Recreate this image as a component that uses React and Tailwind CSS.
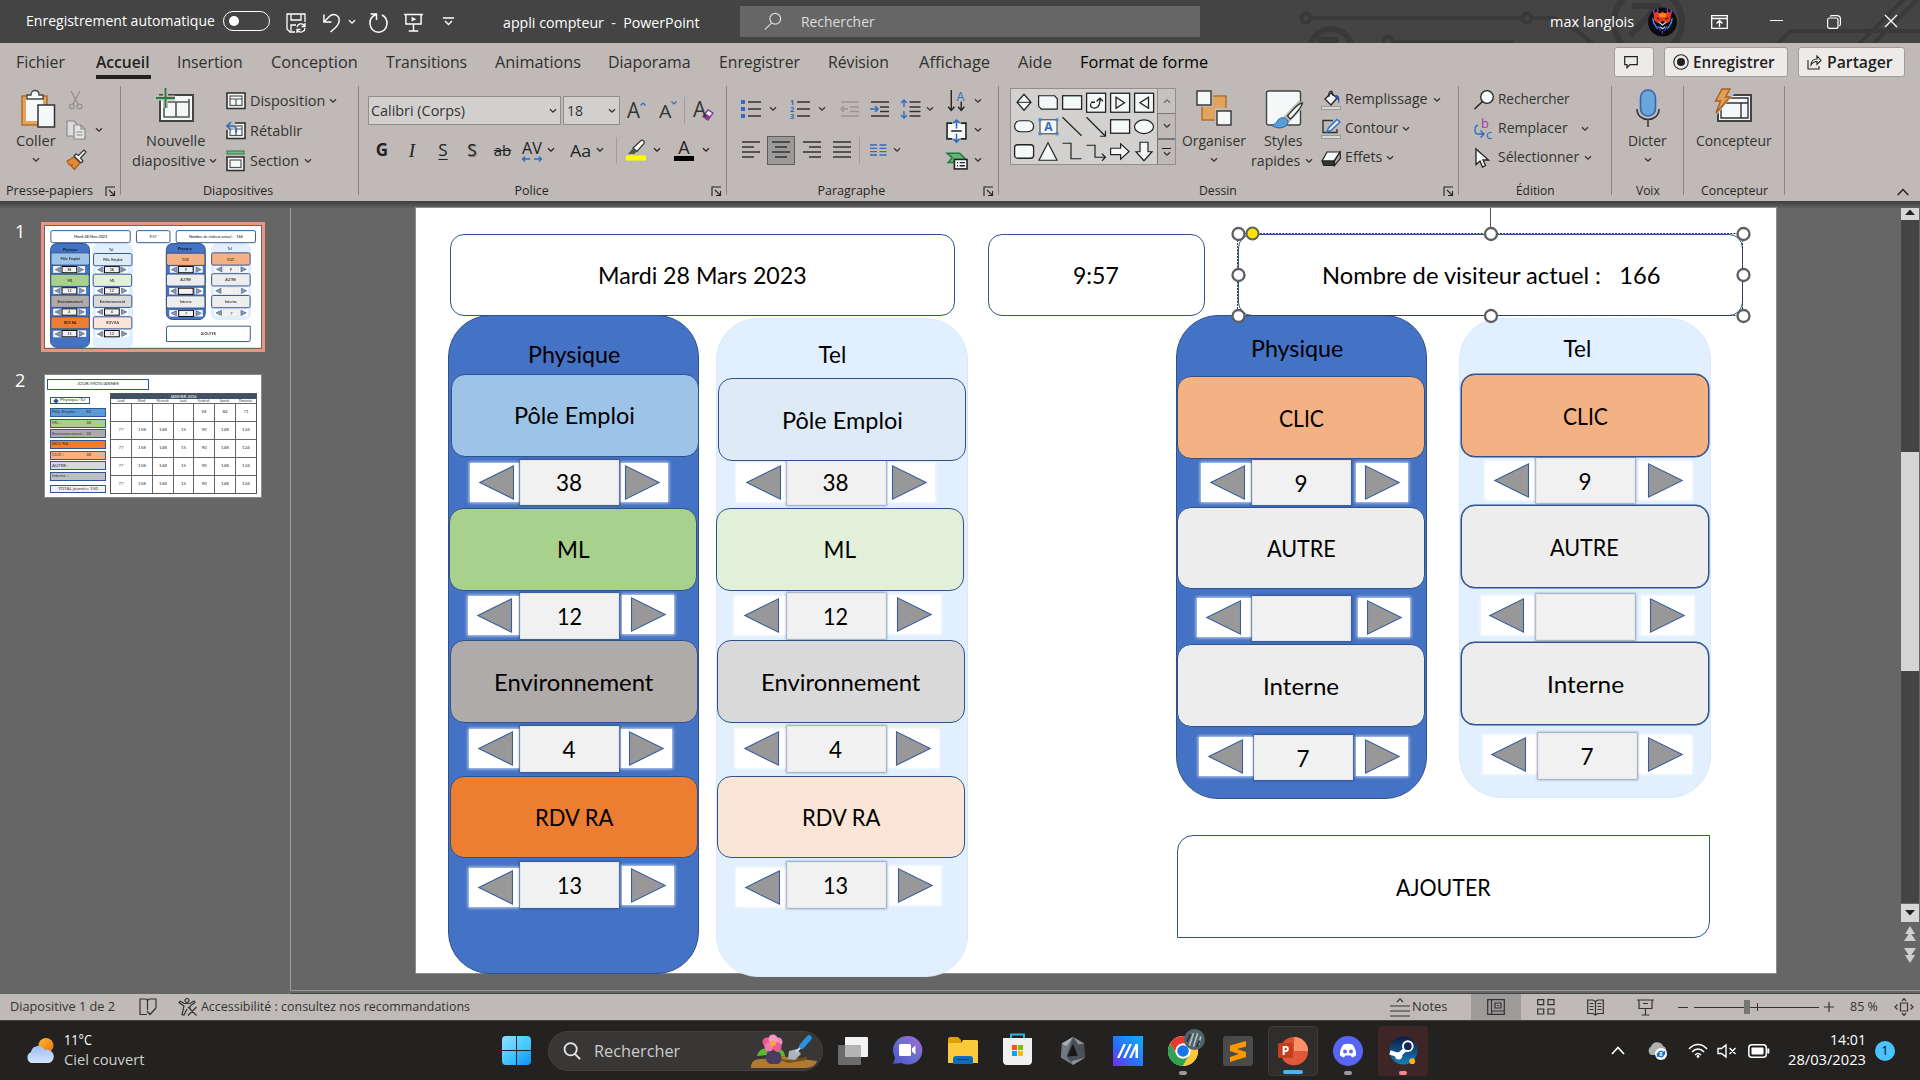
import React, { useLayoutEffect, useRef } from "react";

/* Text squeezed horizontally to the width of its box */
function Fit({ className = "", children }) {
  const outer = useRef(null);
  const inner = useRef(null);
  useLayoutEffect(() => {
    const w = outer.current.clientWidth;
    const n = inner.current.offsetWidth;
    if (w && n) inner.current.style.transform = `scaleX(${w / n})`;
  }, []);
  return (
    <span ref={outer} className={"inline-block shrink-0 whitespace-pre text-left leading-none " + className}>
      <span ref={inner} className="inline-block origin-left">{children}</span>
    </span>
  );
}

const Ic = ({ className = "", vb = "0 0 20 20", children }) => (
  <svg viewBox={vb} fill="none" className={"block shrink-0 overflow-visible " + className}>{children}</svg>
);

const Chev = ({ className = "" }) => (
  <span className={"flex h-[6px] w-3 shrink-0 justify-center " + className}>
    <Ic vb="0 0 8 6" className="h-[6px] w-2"><path d="M1 1.2l3 3 3-3" stroke="currentColor" strokeWidth="1.3" /></Ic>
  </span>
);

const Launcher = ({ className = "" }) => (
  <Ic vb="0 0 11 11" className={"h-[11px] w-[11px] " + className}>
    <path d="M1 10V1h9M4 4l5 5M9.5 5v4.5H5" stroke="#222" strokeWidth="1.1" />
  </Ic>
);

/* ---------- Title bar ---------- */
function TitleBar() {
  return (
    <div className="relative flex h-[43px] items-center overflow-hidden bg-[#444444] text-[15px] text-white">
      <svg className="absolute left-[1200px] top-0 h-[43px] w-[720px]" viewBox="1200 0 720 43" fill="none" stroke="#393939" strokeWidth="4">
        <circle cx="1306" cy="18" r="4.5" /><path d="M1311 18h211M1533 18h22l24 14 14 12" />
        <circle cx="1527" cy="18" r="4.5" />
        <circle cx="1331" cy="50" r="21" strokeWidth="6" /><path d="M1318 41h21" strokeWidth="8" />
        <circle cx="1388" cy="41" r="4.5" /><path d="M1394 42h120" />
        <circle cx="1648" cy="22" r="34" strokeWidth="6" /><path d="M1632 6h26v20M1656 8l-26 28" strokeWidth="6" />
        <path d="M1776 45l14-14h62M1852 31h70M1858 45l46-46M1872 45l46-46" />
      </svg>
      <Fit className="relative -top-px ml-[26px] w-[189px]">Enregistrement automatique</Fit>
      <span className="relative -top-px ml-2 flex h-5 w-[47px] shrink-0 items-center rounded-full border border-white pl-[5px]">
        <span className="h-[10px] w-[10px] rounded-full bg-white" />
      </span>
      <Ic className="ml-4 mt-[2px] h-5 w-5"><path d="M9 19H4l-3-3V1h18v8M5 1v6h10V1M5 18v-6h5" stroke="#fff" strokeWidth="1.3" /><path d="M11 14a4.2 4.2 0 0 1 7-2l1 1M19 10v3.5h-3.500M19 15a4.200 4.200 0 0 1-7 3l-1-1M11 20v-3.500h3.500" stroke="#fff" strokeWidth="1.300" /></Ic>
      <Ic className="ml-4 mt-[2px] h-5 w-[19px]"><path d="M2 1v8h8M2 9l6-6c4-4 11-1 10 5 0 3-2 5-4 7l-5 4.500" stroke="#fff" strokeWidth="1.500" /></Ic>
      <Chev className="ml-[5px]" />
      <Ic className="ml-[10px] mt-[2px] h-5 w-[21px]"><path d="M2 1h6v6M7.500 1.500C3 3.500 1 7 1.500 11c.5 5 4 8.300 8.500 8.300s8-3.300 8.500-8.300c.3-4-1.500-7-5-9" stroke="#fff" strokeWidth="1.500" /></Ic>
      <Ic className="ml-[15px] mt-[2px] h-5 w-[19px]"><path d="M0 1h20M2 1v10h16V1M10 11v7M5 18.500h10" stroke="#fff" strokeWidth="1.500" /><path d="M8 3.500l5 2.500-5 2.500z" fill="#fff" /></Ic>
      <Ic vb="0 0 11 9" className="ml-5 h-[9px] w-[11px]"><path d="M0 1h11M2 4l3.500 3.500L9 4" stroke="#fff" strokeWidth="1.400" /></Ic>
      <Fit className="relative top-px ml-[49px] w-[197px]">appli compteur  -  PowerPoint</Fit>
      <div className="relative ml-10 flex h-[31px] w-[460px] shrink-0 items-center bg-[#666666] text-[#dedede]">
        <Ic className="ml-6 h-[19px] w-[18px]"><circle cx="12.500" cy="7" r="6" stroke="#ddd" strokeWidth="1.300" /><path d="M8.500 11.500L1 19" stroke="#ddd" strokeWidth="1.300" /></Ic>
        <Fit className="ml-[19px] w-[74px]">Rechercher</Fit>
      </div>
      <Fit className="relative ml-[350px] w-[84px]">max langlois</Fit>
      <Ic vb="0 0 30 30" className="relative ml-[14px] h-[30px] w-[29px]">
        <circle cx="15" cy="15" r="15" fill="#0b0b12" />
        <path d="M6 6l4-2 2 3 3-3 3 3 2-3 4 2-1 8-3 2-5-2-5 2-4-3z" fill="#e83a1e" /><path d="M11 6h8l-1 4h-6z" fill="#ff8b1c" /><path d="M9 11l3 1M21 11l-3 1" stroke="#4a1030" strokeWidth="1.500" />
        <path d="M5 11c0 6 3 8 5 11m15-11c0 6-3 8-5 11" stroke="#3a8ee0" strokeWidth="1.500" /><path d="M11 15l4 3 4-3M12 20l3 2 3-2" stroke="#bfe0ff" strokeWidth="1.200" />
        <path d="M10 19l3 5M20 19l-3 5M15 24v3" stroke="#4448c0" strokeWidth="1.300" />
        <path d="M6 2.500v4M10 1v3M20 1v3M24 2.500v4" stroke="#7a48d0" strokeWidth="1.500" />
      </Ic>
      <Ic vb="0 0 17 14" className="relative ml-[34px] h-[14px] w-[17px]"><path d="M.7.700h15.600v12.600H.7zM.7 3.500h15.600M8.500 12V5.500M5.500 8.500l3-3 3 3" stroke="#fff" strokeWidth="1.300" /></Ic>
      <span className="relative -top-px ml-[42px] h-px w-[13px] shrink-0 bg-white" />
      <Ic vb="0 0 14 14" className="relative ml-11 h-[14px] w-[14px]"><rect x=".6" y="3" width="10.400" height="10.400" rx="2" stroke="#fff" strokeWidth="1.200" /><path d="M3 1.500C3.500.800 4 .6 5 .6h5c2 0 3.400 1.400 3.400 3.400v5c0 1-.3 1.500-1 2" stroke="#fff" strokeWidth="1.200" /></Ic>
      <Ic vb="0 0 14 14" className="relative -top-px ml-[43px] h-[14px] w-[14px]"><path d="M1 1l12 12M13 1L1 13" stroke="#fff" strokeWidth="1.300" /></Ic>
    </div>
  );
}

/* ---------- Tabs ---------- */
const TABS = [
  ["Fichier", "ml-4 w-[49px]"],
  ["Insertion", "ml-[26px] w-[66px]"],
  ["Conception", "ml-7 w-[87px]"],
  ["Transitions", "ml-7 w-[81px]"],
  ["Animations", "ml-7 w-[86px]"],
  ["Diaporama", "ml-[27px] w-[83px]"],
  ["Enregistrer", "ml-7 w-[81px]"],
  ["Révision", "ml-7 w-[61px]"],
  ["Affichage", "ml-[30px] w-[71px]"],
  ["Aide", "ml-7 w-[34px]"],
];
function Tabs() {
  return (
    <div className="flex h-[43px] items-center text-[16.5px] text-[#303030]">
      <Fit className={"relative -top-[2px] " + TABS[0][1]}>{TABS[0][0]}</Fit>
      <div className="ml-[31px] flex h-9 w-[55px] shrink-0 flex-col justify-between self-start">
        <Fit className="mt-[11px] w-[54px] font-semibold text-[#222]">Accueil</Fit>
        <span className="h-1 w-full bg-[#222]" />
      </div>
      {TABS.slice(1).map(([t, c]) => (
        <Fit key={t} className={"relative -top-[2px] " + c}>{t}</Fit>
      ))}
      <Fit className="relative -top-[2px] ml-7 w-[128px] text-black">Format de forme</Fit>
      <div className="mb-[5px] ml-[406px] flex shrink-0 items-center gap-[10px] font-semibold text-[#222]">
        <div className="flex h-[30px] w-10 items-center justify-center rounded-[3px] border border-[#a09c9a] bg-[#edebe9]">
          <Ic vb="0 0 14 13" className="-ml-[6px] h-[13px] w-[14px]"><path d="M.7.700h12.600v8H6l-3 3v-3H.7z" stroke="#222" strokeWidth="1.200" /></Ic>
        </div>
        <div className="flex h-[30px] w-[124px] items-center rounded-[3px] border border-[#a09c9a] bg-[#edebe9]">
          <Ic vb="0 0 16 16" className="ml-[8px] h-4 w-4"><circle cx="8" cy="8" r="7.200" stroke="#222" strokeWidth="1.100" /><circle cx="8" cy="8" r="4" fill="#222" /></Ic>
          <Fit className="ml-1 w-[82px] text-base">Enregistrer</Fit>
        </div>
        <div className="flex h-[30px] w-[107px] items-center rounded-[3px] border border-[#a09c9a] bg-[#edebe9]">
          <Ic vb="0 0 15 15" className="ml-[8px] h-[15px] w-[15px]"><path d="M1 5v9h11v-3M4 10c0-4 3-6 6-6V1l4 4.500L10 9.500v-3c-3 0-4.500 1-6 3.500z" stroke="#222" strokeWidth="1.100" /></Ic>
          <Fit className="ml-[5px] w-[66px] text-base">Partager</Fit>
        </div>
      </div>
    </div>
  );
}

/* ---------- Ribbon ---------- */
function Group({ className = "", label, labelClass = "w-10", launcher, children }) {
  return (
    <div className="flex shrink-0">
      <div className={"flex h-[115px] flex-col " + className}>
        <div className="flex h-24 items-start">{children}</div>
        <div className="relative flex h-[18px] items-center justify-center text-[12.5px] text-[#262626]">
          <Fit className={labelClass}>{label}</Fit>
          {launcher && <Launcher className="absolute right-[4px] top-1" />}
        </div>
      </div>
      <div className="h-[109px] w-px bg-[#8b8785]" />
    </div>
  );
}
const Sep = ({ className = "" }) => <span className={"h-[27px] w-px shrink-0 bg-[#a29e9c] " + className} />;
const Small = ({ icon, label, className, chev, h = "h-[30px]" }) => (
  <div className={"flex items-center " + h}>
    {icon}
    <Fit className={"relative -top-px ml-1 " + className}>{label}</Fit>
    {chev && <Chev className={chev} />}
  </div>
);
const Layout = ({ children }) => (
  <Ic className="h-5 w-5"><rect x="1" y="2" width="18" height="15.500" fill="#f4f8f8" stroke="#333" strokeWidth="1.600" /><rect x="4" y="5" width="12" height="9.500" stroke="#555" strokeWidth="1.200" /><path d="M4 8h12M10 8v6.500" stroke="#555" strokeWidth="1.200" />{children}</Ic>
);

const W = "#f4f8f8";
const D = "#222";
const GALLERY = [
  <g key="0"><path d="M12 4l7 8-7 8-7-8zM5 12h14" fill={W} stroke={D} strokeWidth="1.200" /></g>,
  <path key="1" d="M2.600 5.500h16l2.700 3v10.300h-16l-2.700-3z" fill={W} stroke={D} strokeWidth="1.200" />,
  <rect key="2" x="2.600" y="5.500" width="19" height="13.500" fill={W} stroke={D} strokeWidth="1.300" />,
  <g key="3"><rect x="2.600" y="3" width="19" height="19" fill={W} stroke={D} strokeWidth="1.300" /><path d="M7 13c-2 4 3 6 6 4 2-1 3-3 3-8M12.500 11l3.500-3 3 3M7 12h4" stroke={D} strokeWidth="1.300" /></g>,
  <g key="4"><rect x="2.600" y="3" width="19" height="19" fill={W} stroke={D} strokeWidth="1.300" /><path d="M8 7v11l8.500-5.500z" stroke={D} strokeWidth="1.300" /></g>,
  <g key="5"><rect x="2.600" y="3" width="19" height="19" fill={W} stroke={D} strokeWidth="1.300" /><path d="M16.500 7v11L8 12.500z" stroke={D} strokeWidth="1.300" /></g>,
  <rect key="6" x="2.600" y="6.500" width="19" height="11" rx="5.500" fill={W} stroke={D} strokeWidth="1.200" />,
  <g key="7"><rect x="4" y="5.500" width="17" height="14" fill={W} stroke="#555" strokeWidth="1.200" /><path d="M2.500 4h3v3h-3zM19.500 4h3v3h-3zM2.500 18h3v3h-3zM19.500 18h3v3h-3z" fill="#4a84d0" /><text x="12.500" y="17" textAnchor="middle" fontSize="12" fontWeight="700" fontFamily="Open Sans" fill="#2e6cc0">A</text></g>,
  <path key="8" d="M2.500 3l19 18.500" stroke={D} strokeWidth="1.200" />,
  <path key="9" d="M2.500 3l18.500 18.500M21.500 16.500V22h-5.500" stroke={D} strokeWidth="1.200" />,
  <rect key="10" x="2.600" y="5.500" width="19" height="13.500" fill={W} stroke={D} strokeWidth="1.300" />,
  <ellipse key="11" cx="12" cy="12.500" rx="9.500" ry="6.800" fill={W} stroke={D} strokeWidth="1.200" />,
  <rect key="12" x="2.600" y="5.500" width="19" height="13.500" rx="3" fill={W} stroke={D} strokeWidth="1.300" />,
  <path key="13" d="M12 3.500l9 17.500H3z" fill={W} stroke={D} strokeWidth="1.200" />,
  <path key="14" d="M2.500 4H11v15.500h10.500" stroke={D} strokeWidth="1.200" />,
  <path key="15" d="M2.500 6H11v12h10M18 14.500l3.500 3.500-3.500 3.500" stroke={D} strokeWidth="1.200" />,
  <path key="16" d="M2.600 9h10V4.500l8.500 7.700-8.500 7.700v-4.500h-10z" fill={W} stroke={D} strokeWidth="1.200" />,
  <path key="17" d="M8 3h8v9.500h4L12 21.500l-8-9H8z" fill={W} stroke={D} strokeWidth="1.200" />,
];

const Lines = ({ rows }) => (
  <Ic className="h-5 w-5"><path d={rows} stroke="#333" strokeWidth="1.500" /></Ic>
);

function Ribbon() {
  return (
    <div className="flex h-[115px] items-start text-[15px] text-[#333]">
      <Group className="w-[120px]" label="Presse-papiers" labelClass="w-[87px] mr-[22px]" launcher>
        <div className="ml-[14px] flex w-[43px] flex-col items-center pt-1">
          <Ic vb="0 0 36 38" className="ml-[5px] h-[38px] w-9"><rect x="2" y="6" width="25" height="29" fill="#dfa45e" stroke="#b56a28" strokeWidth="1.500" /><rect x="6" y="9" width="17" height="22" fill={W} /><path d="M7 9V5h4c0-6 8-6 8 0h4v4z" fill={W} stroke="#444" strokeWidth="1.300" /><rect x="18" y="15" width="16.500" height="22" fill={W} stroke="#333" strokeWidth="1.500" /></Ic>
          <Fit className="mt-[5px] w-10">Coller</Fit>
          <Chev className="mt-[9px]" />
        </div>
        <div className="ml-[9px] flex flex-col gap-[10px] pt-1">
          <Ic className="h-5 w-5 opacity-60"><path d="M5 1l7 13M14 1L7 14" stroke="#777" strokeWidth="1.400" /><circle cx="6" cy="16.500" r="2.400" stroke="#777" strokeWidth="1.300" /><circle cx="13.500" cy="16.500" r="2.400" stroke="#777" strokeWidth="1.300" /></Ic>
          <div className="flex items-center">
            <Ic className="h-5 w-5"><path d="M7 16H1V1h7l3 3" fill="#dcdcdc" stroke="#888" strokeWidth="1.200" /><path d="M8 5h7l4 4v10H8z" fill="#e4e4e4" stroke="#888" strokeWidth="1.200" /><path d="M15 5v4h4M10.500 12h6M10.500 15h6" stroke="#888" strokeWidth="1.200" /></Ic>
            <Chev className="ml-[7px]" />
          </div>
          <Ic className="h-5 w-5"><path d="M1 11l7-4 6 6-5.500 6.500-3-3 1-2-3 .5z" fill="#e08a3c" stroke="#b05c1c" strokeWidth="1.200" /><path d="M8 6l7 7 2-2-2.500-3L20 2l-2-2-5.500 5.500L10 4z" fill={W} stroke="#333" strokeWidth="1.200" /></Ic>
        </div>
      </Group>

      <Group className="w-[237px]" label="Diapositives" labelClass="w-[70px] mr-[3px]">
        <div className="ml-[11px] flex w-[86px] flex-col items-center pt-[2px]">
          <Ic vb="0 0 38 34" className="h-[34px] w-[38px]"><rect x="4" y="7" width="33" height="26" fill="#f4f8f8" stroke="#444" strokeWidth="2" /><path d="M8 14h25M8 14v15h25V11M20 14v15" stroke="#555" strokeWidth="1.600" /><path d="M0 10h19M9.500 0v20" stroke="#bfbab7" strokeWidth="5" /><path d="M0 10h19M9.500 0v20" stroke="#1e8040" strokeWidth="1.800" /></Ic>
          <Fit className="mt-[11px] w-[59px]">Nouvelle</Fit>
          <div className="mt-[5px] flex items-center"><Fit className="w-[73px]">diapositive</Fit><Chev className="ml-[2px]" /></div>
        </div>
        <div className="ml-2">
          <Small icon={<Layout />} label="Disposition" className="w-[75px]" chev="ml-[2px]" />
          <Small icon={<Layout><path d="M0 0h9v9H0z" fill="#bfbab7" /><path d="M1 5h6c3 0 4 3 3 7M5 1L1 5l4 4" stroke="#2e6cc0" strokeWidth="1.700" /></Layout>} label="Rétablir" className="w-[52px]" />
          <Small icon={<Ic className="h-5 w-5"><rect x="1" y="0" width="17" height="3" fill="#7ab888" stroke="#2a7a44" strokeWidth="1" /><rect x="1" y="6" width="17" height="13.500" fill={W} stroke="#333" strokeWidth="1.600" /><rect x="4" y="9" width="11" height="7.500" stroke="#555" strokeWidth="1.200" /></Ic>} label="Section" className="w-[49px]" chev="ml-[3px]" />
        </div>
      </Group>

      <Group className="w-[367px]" label="Police" labelClass="w-[34px] mr-[22px]" launcher>
        <div className="pl-[9px]">
          <div className="mt-[10px] flex h-[29px] items-center">
            <div className="flex h-[29px] w-[193px] items-center justify-between border border-[#908d8b] bg-[#d2d0cf] pl-[2px]">
              <Fit className="w-[94px]">Calibri (Corps)</Fit><Chev className="mr-[1px]" />
            </div>
            <div className="ml-[2px] flex h-[29px] w-[57px] items-center justify-between border border-[#908d8b] bg-[#d2d0cf] pl-[3px]">
              <Fit className="w-4">18</Fit><Chev className="mr-[1px]" />
            </div>
            <div className="ml-[7px] flex w-[20px] -translate-y-[2px] items-start"><Fit className="w-[13px] text-[22px]">A</Fit><Ic vb="0 0 6 4" className="mt-[4px] h-1 w-[6px]"><path d="M.5 3.500L3 1l2.500 2.500" stroke="#2e6cc0" strokeWidth="1.200" /></Ic></div>
            <div className="ml-[12px] flex w-[18px] -translate-y-[2px] items-start"><Fit className="mt-[4px] w-[12px] text-[18px]">A</Fit><Ic vb="0 0 6 4" className="mt-[3px] h-1 w-[6px]"><path d="M.5.500L3 3 5.500.500" stroke="#2e6cc0" strokeWidth="1.200" /></Ic></div>
            <Sep className="ml-[7px]" />
            <div className="ml-2 flex w-5 -translate-y-px items-center"><Fit className="w-[13px] text-[21px]">A</Fit><Ic vb="0 0 12 12" className="-ml-1 mt-[10px] h-3 w-3"><path d="M1 7.500L6 1l5 3-5 7z" fill="#f4f0f6" stroke="#8a3a96" strokeWidth="1.400" /><path d="M1 7.500l2.500-3 5 3L6 11z" fill="#8a3a96" /></Ic></div>
          </div>
          <div className="mt-[10px] flex h-[30px] items-center text-[17px] text-[#222]">
            <span className="w-[28px] shrink-0 -translate-y-px text-center font-bold leading-none">G</span>
            <span className="w-[32px] shrink-0 text-center font-['Liberation_Serif'] text-[19px] italic leading-none">I</span>
            <span className="w-[30px] shrink-0 -translate-y-px text-center leading-none underline underline-offset-[3px]">S</span>
            <span className="w-[28px] shrink-0 -translate-y-px text-center leading-none [text-shadow:1px_1px_1px_#777]">S</span>
            <span className="flex w-[33px] shrink-0 justify-center text-[15px] leading-none line-through">ab</span>
            <span className="flex w-[26px] shrink-0 flex-col items-center">
              <Fit className="w-5 text-[17px]">AV</Fit>
              <Ic vb="0 0 20 6" className="h-[6px] w-5"><path d="M0 3h8M3 .5L.700 3 3 5.500M20 3h-8M17 .5L19.300 3 17 5.500" stroke="#2e6cc0" strokeWidth="1.300" /></Ic>
            </span>
            <Chev />
            <span className="ml-[10px] flex w-[27px] shrink-0 justify-center leading-none"><Fit className="w-[21px]">Aa</Fit></span>
            <Chev />
            <Sep className="ml-[10px]" />
            <Ic vb="0 0 21 22" className="ml-2 h-[22px] w-[21px]"><path d="M8 9l8-7.500c2-1 4 1 3 3L12 12.500z" fill={W} stroke="#333" strokeWidth="1.200" /><path d="M8 9l4 3.500-3 2.500H3z" fill="#555" /><path d="M1 16.500h20v5H1z" fill="#ff0" /></Ic>
            <Chev className="ml-[5px]" />
            <span className="ml-[11px] flex w-[20px] shrink-0 flex-col items-center"><span className="text-[18px] leading-[17px]">A</span><span className="h-[5px] w-full bg-black" /></span>
            <Chev className="ml-[6px]" />
          </div>
        </div>
      </Group>

      <Group className="w-[271px]" label="Paragraphe" labelClass="w-[68px] mr-[22px]" launcher>
        <div className="w-[219px] pt-2">
          <div className="flex h-[30px] items-center pl-[14px]">
            <Ic className="h-5 w-5"><path d="M7 3h13M7 10h13M7 17h13" stroke="#333" strokeWidth="1.500" /><path d="M0 1h4v4H0zM0 8h4v4H0zM0 15h4v4H0z" fill="#2e6cc0" /></Ic>
            <Chev className="ml-[6px]" />
            <Ic className="ml-[11px] h-5 w-5"><path d="M7 3h13M7 10h13M7 17h13" stroke="#333" strokeWidth="1.500" /><g fill="#2e6cc0" fontSize="7.500" fontWeight="700" fontFamily="Open Sans"><text x="0" y="5.500">1</text><text x="0" y="12.700">2</text><text x="0" y="20">3</text></g></Ic>
            <Chev className="ml-[6px]" />
            <Ic className="ml-3 h-5 w-5"><path d="M1 3h18M10 8h9M10 12.500h9M1 17h18M1 10h7M4 7l-3 3 3 3" stroke="#999593" strokeWidth="1.400" /></Ic>
            <Ic className="ml-[10px] h-5 w-5"><path d="M1 3h18M10 8h9M10 12.500h9M1 17h18" stroke="#333" strokeWidth="1.400" /><path d="M0 10h8M5 7l3 3-3 3" stroke="#2e6cc0" strokeWidth="1.500" /></Ic>
            <Ic className="ml-[10px] h-5 w-[21px]"><path d="M9 3h11M9 8h11M9 12.500h11M9 17h11" stroke="#333" strokeWidth="1.400" /><path d="M3.500 1v7M.5 4l3-3 3 3M3.500 12v7M.5 16l3 3 3-3" stroke="#2e6cc0" strokeWidth="1.400" /></Ic>
            <Chev className="ml-[3px]" />
          </div>
          <div className="mt-[11px] flex h-[30px] items-center pl-[14px]">
            <Lines rows="M1 2h18M1 7h12M1 12h18M1 17h12" />
            <span className="ml-[6px] flex h-[29px] w-7 shrink-0 items-center justify-center border border-[#5f5d5c] bg-[#9c9a98]"><Lines rows="M1 2h18M4 7h12M1 12h18M4 17h12" /></span>
            <span className="ml-[7px]"><Lines rows="M1 2h18M7 7h12M1 12h18M7 17h12" /></span>
            <span className="ml-[10px]"><Lines rows="M1 2h18M1 7h18M1 12h18M1 17h18" /></span>
            <Sep className="ml-[7px]" />
            <Ic vb="0 0 17 12" className="ml-[10px] h-3 w-[17px]"><path d="M0 1h7M0 4.300h7M0 7.700h7M0 11h7M9.500 1h7M9.500 4.300h7M9.500 7.700h7M9.500 11h7" stroke="#2e6cc0" strokeWidth="1.300" /></Ic>
            <Chev className="ml-1" />
          </div>
        </div>
        <div>
          <div className="flex h-[29px] items-center"><Ic className="h-[21px] w-[21px]"><path d="M5 0v19M2 16l3 3.500L8 16M14.500 11v8M11.500 16l3 3.500 3-3.500" stroke="#222" strokeWidth="1.300" /><text x="10" y="10" fontSize="12" fontFamily="Open Sans" fill="#2e6cc0">A</text></Ic><Chev className="ml-[5px]" /></div>
          <div className="flex h-[30px] items-center"><Ic className="h-[21px] w-[21px]"><rect x="1" y="3" width="18" height="15" fill={W} /><path d="M6 3H1v15h5M14 3h5v15h-5M5 10.500h10" stroke="#222" strokeWidth="1.500" /><path d="M10 0v8M7 3l3-3 3 3M10 21v-8M7 18l3 3 3-3" stroke="#2e6cc0" strokeWidth="1.500" /></Ic><Chev className="ml-[5px]" /></div>
          <div className="flex h-[30px] items-center"><Ic className="h-[21px] w-[21px]"><path d="M1 3h12l5 5-3 4H2l4-4.500z" fill="#66b27a" stroke="#1e7a3c" strokeWidth="1.400" /><rect x="8" y="9" width="12" height="9" fill={W} stroke="#222" strokeWidth="1.500" /><path d="M10.500 12h1M13 12h5M10.500 15h1M13 15h5" stroke="#222" strokeWidth="1.200" /></Ic><Chev className="ml-[5px]" /></div>
        </div>
      </Group>

      <Group className="w-[459px]" label="Dessin" labelClass="w-[38px] mr-[22px]" launcher>
        <div className="ml-[11px] mt-[2px] flex h-[77px] w-[166px] border border-[#918e8c] bg-[#d2d1d0]">
          <div className="grid h-full flex-1 grid-cols-[repeat(6,24px)] content-center pl-px">
            {GALLERY.map((g, i) => <Ic key={i} vb="0 0 24 24" className="h-[24.500px] w-6">{g}</Ic>)}
          </div>
          <div className="flex w-[18px] flex-col">
            <div className="flex flex-1 items-center justify-center border-l border-[#918e8c] bg-[#c5c2c0]"><Chev className="rotate-180 opacity-60" /></div>
            <div className="flex flex-1 items-center justify-center border border-r-0 border-[#777] bg-[#bfbab7]"><Chev /></div>
            <div className="flex flex-1 flex-col items-center justify-center gap-[2px] border-l border-t border-[#777] bg-[#bfbab7]"><span className="h-px w-[9px] bg-[#222]" /><Chev /></div>
          </div>
        </div>
        <div className="ml-1 flex w-[67px] flex-col items-center pt-1">
          <Ic vb="0 0 36 38" className="h-[38px] w-9"><rect x="6" y="6" width="24" height="24" fill="#dfa45e" stroke="#b56a28" strokeWidth="1.400" /><path d="M0 0h17v17H0zM19 18h17v18H19z" fill="#bfbab7" /><rect x="1" y="1" width="14" height="14" fill={W} stroke="#333" strokeWidth="1.400" /><rect x="21" y="21" width="14" height="14" fill={W} stroke="#333" strokeWidth="1.400" /></Ic>
          <Fit className="mt-[5px] w-16">Organiser</Fit>
          <Chev className="mt-[9px]" />
        </div>
        <div className="ml-[4px] flex w-[63px] flex-col items-center pt-1">
          <Ic vb="0 0 38 38" className="ml-[2px] h-[38px] w-[38px]"><rect x="1.500" y="1" width="34" height="34" rx="2" fill={W} stroke="#444" strokeWidth="1.400" /><path d="M37 13L20 31" stroke="#bfbab7" strokeWidth="8" /><path d="M37.500 13c-3 0-6 2-15 13l3 3c8-8 11-12 12-16z" fill={W} stroke="#333" strokeWidth="1.300" /><path d="M6 35c4 0 5-2 7-5 3-4 9-2 10 1 1 6-9 10-17 4z" fill="#5a9cd8" stroke="#2c66a8" strokeWidth="1" /></Ic>
          <Fit className="mt-[5px] w-[38px]">Styles</Fit>
          <div className="mt-[5px] flex items-center"><Fit className="w-[49px]">rapides</Fit><Chev className="ml-[3px]" /></div>
        </div>
        <div className="-mt-px ml-[7px]">
          <Small h="h-[29px]" icon={<Ic className="h-5 w-5"><path d="M10 3l-6 6 6 6 6-7z" fill={W} stroke="#222" strokeWidth="1.300" /><path d="M8 7c-1-7 4-8 4-1" stroke="#222" strokeWidth="1.200" /><path d="M14 5c4 0 5 2 4 9-1-3-1-5-3-6z" fill="#2c4fa0" /><rect x=".5" y="16.500" width="19" height="3" fill="#d8d8d8" stroke="#999" /></Ic>} label="Remplissage" className="w-[83px]" chev="ml-[3px]" />
          <Small h="h-[29px]" icon={<Ic className="h-5 w-5"><path d="M12 1.500H2v12h14V10" stroke="#333" strokeWidth="1.400" /><path d="M6 13l1.500-4L16 .500l3 2.500-9 8.500z" fill="#e8f0fa" stroke="#2e6cc0" strokeWidth="1.400" /><rect x=".5" y="16.500" width="19" height="3" fill="#d8d8d8" stroke="#999" /></Ic>} label="Contour" className="w-[53px]" chev="ml-[2px]" />
          <Small h="h-[29px]" icon={<Ic className="h-5 w-5"><path d="M6 4h13l-6 9H1z" fill={W} stroke="#222" strokeWidth="1.200" /><path d="M1 13h12v4.500H2.500z" fill="#333" stroke="#222" /><path d="M19 4l.5 6-6 7.500V13z" fill="#aaa" stroke="#222" strokeWidth="1.200" /></Ic>} label="Effets" className="w-[37px]" chev="ml-[2px]" />
        </div>
      </Group>

      <Group className="w-[152px]" label="Édition" labelClass="w-[39px]">
        <div className="-mt-px ml-[15px]">
          <Small h="h-[29px]" icon={<Ic className="h-5 w-5"><circle cx="13" cy="7" r="6.300" fill={W} stroke="#222" strokeWidth="1.300" /><path d="M8.500 11.500L.500 19" stroke="#222" strokeWidth="1.500" /></Ic>} label="Rechercher" className="w-[72px]" />
          <Small h="h-[29px]" icon={<Ic className="h-5 w-5"><text x="7" y="9" fontSize="13" fontFamily="Open Sans" fill="#a03aa8">b</text><text x="12" y="19.500" fontSize="13" fontFamily="Open Sans" fill="#2e6cc0">c</text><path d="M4 6c-4 1-4 9 0 9h5M6.500 11.500L10 15l-3.500 3.500" stroke="#2e6cc0" strokeWidth="1.400" /></Ic>} label="Remplacer" className="w-[70px]" chev="ml-[11px]" />
          <Small h="h-[29px]" icon={<Ic className="h-5 w-5"><path d="M2 1v15.500l4-3.500 2.500 6 3-1.500-2.500-5.500h5.500z" fill={W} stroke="#222" strokeWidth="1.300" /></Ic>} label="Sélectionner" className="w-[81px]" chev="ml-[3px]" />
        </div>
      </Group>

      <Group className="w-[71px]" label="Voix" labelClass="w-6">
        <div className="flex w-full flex-col items-center pt-[3px]">
          <Ic vb="0 0 24 38" className="h-[38px] w-6"><rect x="4.500" y="1" width="15" height="26" rx="7.500" fill="#6aa6dc" stroke="#3a62a8" strokeWidth="1.600" /><path d="M1 20c0 14 22 14 22 0M12 31v7" stroke="#333" strokeWidth="1.500" /></Ic>
          <Fit className="mt-[6px] w-[39px]">Dicter</Fit>
          <Chev className="mt-[9px]" />
        </div>
      </Group>

      <Group className="w-[100px]" label="Concepteur" labelClass="w-[67px]">
        <div className="flex w-full flex-col items-center pt-[2px]">
          <Ic vb="0 0 38 36" className="-ml-[3px] h-9 w-[38px]"><rect x="4" y="7" width="33" height="26" fill={W} stroke="#444" strokeWidth="2" /><path d="M7 15h27M27 15v15M7 10h27v20H7z" stroke="#333" strokeWidth="1.400" /><path d="M7 0h9l-4 8h4L1 26l4-12H0z" fill="#bfbab7" stroke="#bfbab7" strokeWidth="4" /><path d="M8 1h8l-4.500 8H16L2 25l4.500-12H1.500z" fill="#e0a055" stroke="#b05c1c" strokeWidth="1.400" /></Ic>
          <Fit className="mt-[9px] w-[76px]">Concepteur</Fit>
        </div>
      </Group>
      <Ic vb="0 0 12 8" className="ml-[112px] mt-[102px] h-2 w-3"><path d="M.700 7L6 1.500 11.300 7" stroke="#222" strokeWidth="1.500" /></Ic>
    </div>
  );
}

/* ---------- Slide 1 (coordinates in page pixels; origin 416,208) ---------- */
const BOXES = [
  { x: 448, y: 315, w: 251, h: 659, r: 42, f: "#4472c4", b: "#2f528f" },
  { x: 716, y: 318, w: 252, h: 659, r: 42, f: "#e1efff", b: "#d9e8fb" },
  { x: 1176, y: 315, w: 251, h: 484, r: 42, f: "#4472c4", b: "#2f528f" },
  { x: 1459, y: 318, w: 252, h: 480, r: 42, f: "#e1efff", b: "#d9e8fb" },
  { x: 450, y: 234, w: 505, h: 82, r: 14, f: "#fff", b: "#2f528f" },
  { x: 988, y: 234, w: 217, h: 82, r: 14, f: "#fff", b: "#2f528f" },
  { x: 1238, y: 234, w: 505, h: 82, r: 14, f: "#fff", b: "#2f528f" },
];
const CARDS = [
  [451, 374, 248, 83, "#9dc3e6"], [718, 378, 248, 83, "#deebf7"],
  [449, 508, 248, 83, "#a9d18e"], [716, 508, 248, 83, "#e2f0d9"],
  [450, 640, 248, 83, "#afabaa"], [717, 640, 248, 83, "#d9d9d9"],
  [450, 776, 248, 82, "#ed7d31"], [717, 776, 248, 82, "#fbe5d6"],
  [1177, 376, 248, 83, "#f4b183"], [1461, 374, 248, 83, "#f4b183"],
  [1177, 507, 248, 82, "#ededed"], [1461, 505, 248, 83, "#ededed"],
  [1177, 644, 248, 83, "#ededed"], [1461, 642, 248, 83, "#ededed"],
];
/* white left x, white right end, left arrow x, right arrow x, arrows y (left, right), value box x, y, h */
const COUNTERS = [
  [469, 669, 479, 625, 465, 465, 520, 460, 45],
  [735, 936, 746, 892, 465, 465, 787, 460, 45],
  [467, 675, 477, 631, 598, 597, 520, 593, 46],
  [733, 942, 744, 897, 598, 597, 787, 593, 46],
  [468, 673, 478, 629, 731, 731, 520, 726, 46],
  [734, 940, 744, 896, 731, 731, 787, 726, 46],
  [468, 675, 478, 631, 870, 868, 520, 862, 46],
  [735, 942, 745, 898, 870, 868, 787, 862, 46],
  [1200, 1409, 1210, 1365, 465, 465, 1252, 460, 45],
  [1484, 1693, 1494, 1648, 463, 463, 1536, 458, 45],
  [1196, 1411, 1206, 1367, 600, 600, 1252, 596, 45],
  [1480, 1695, 1489, 1650, 598, 598, 1536, 594, 46],
  [1198, 1409, 1208, 1365, 739, 739, 1254, 735, 45],
  [1482, 1693, 1491, 1648, 737, 737, 1538, 733, 46],
];
/* centre x, centre y, width class, text */
const LABELS = [
  [702, 275, "w-[209px]", "Mardi 28 Mars 2023"], [1096, 275, "w-[46px]", "9:57"], [1490.5, 275, "w-[338px]", "Nombre de visiteur actuel :   166"],
  [574, 354, "w-[92px]", "Physique"], [832.500, 354, "w-7", "Tel"],
  [574.5, 415, "w-[121px]", "Pôle Emploi"], [842, 420, "w-[121px]", "Pôle Emploi"],
  [569, 482, "w-[26px]", "38"], [835.500, 482, "w-[26px]", "38"],
  [573, 549, "w-8", "ML"], [839.5, 549, "w-8", "ML"],
  [569, 616, "w-[25px]", "12"], [835.500, 616, "w-[25px]", "12"],
  [573.500, 682, "w-[159px]", "Environnement"], [840, 682, "w-[159px]", "Environnement"],
  [569, 749, "w-[13px]", "4"], [835.500, 749, "w-[13px]", "4"],
  [574, 817, "w-[78px]", "RDV RA"], [840.500, 817, "w-[78px]", "RDV RA"],
  [569, 885, "w-[25px]", "13"], [835.500, 885, "w-[25px]", "13"],
  [1296.500, 348, "w-[92px]", "Physique"], [1577.500, 348, "w-7", "Tel"],
  [1301, 418, "w-[45px]", "CLIC"], [1585, 416, "w-[45px]", "CLIC"],
  [1301, 483, "w-[13px]", "9"], [1585, 481, "w-[13px]", "9"],
  [1301, 548, "w-[69px]", "AUTRE"], [1584.500, 547, "w-[69px]", "AUTRE"],
  [1301, 686, "w-[76px]", "Interne"], [1585, 684, "w-[77px]", "Interne"],
  [1303, 758, "w-[13px]", "7"], [1587, 756, "w-[13px]", "7"],
  [1443, 887, "w-[95px]", "AJOUTER"],
];
const place = (x, y, w, h) => ({ left: x - 416, top: y - 208, width: w, height: h });

function Slide({ thumb }) {
  const bw = thumb ? 6 : 1;
  return (
    <div className="relative h-[765px] w-[1360px] bg-white font-['Lato','Open_Sans',sans-serif] text-[22.5px] text-black">
      {BOXES.map((s, i) => (
        <div key={i} className="absolute border-solid" style={{ ...place(s.x, s.y, s.w, s.h), borderRadius: s.r, background: s.f, borderColor: s.b, borderWidth: bw }} />
      ))}
      <div className="absolute rounded-br-[16px] rounded-tl-[16px] border-solid border-[#2f528f]" style={{ ...place(1177, 835, 533, 103), borderWidth: bw }} />
      {COUNTERS.map(([l, r, la, ra, ly, ry, bx, by, bh], i) => (
        <React.Fragment key={i}>
          <div className="absolute bg-white shadow-[0_0_3px_1px_rgba(255,255,255,0.7)]" style={place(l + 1, ly - 2, bx - l - 2, 39)} />
          <div className="absolute bg-white shadow-[0_0_3px_1px_rgba(255,255,255,0.7)]" style={place(Math.max(bx + 101, ra - 9), ry - 2, r - Math.max(bx + 101, ra - 9) - 1, 39)} />
          <svg className="absolute overflow-visible" viewBox="0 0 35 35" style={place(la, ly, 35, 35)}><path d="M.8 17.500L34.500.800v33.400z" fill="#989898" stroke="#3a5ca0" strokeWidth={thumb ? 4 : 1.1} /></svg>
          <svg className="absolute overflow-visible" viewBox="0 0 35 35" style={place(ra, ry, 35, 35)}><path d="M34.200 17.500L.500.800v33.400z" fill="#989898" stroke="#3a5ca0" strokeWidth={thumb ? 4 : 1.1} /></svg>
          <div
            className={"absolute bg-[#f1f1f1] " + (thumb ? (bx > 1500 ? "border-[3px] border-[#ddd]" : "border-[6px] border-black") : "border border-[#e6e7ea] shadow-[0_0_2px_1px_rgba(30,50,90,0.42)]")}
            style={place(bx, by, 99, bh)}
          />
        </React.Fragment>
      ))}
      {CARDS.map(([x, y, w, h, f], i) => (
        <div key={i} className="absolute rounded-[14px] border-solid border-[#2f528f]" style={{ ...place(x, y, w, h), background: f, borderWidth: thumb ? 6 : 1, boxShadow: x === 1461 && !thumb ? "0 0 0 .5px #2f528f" : "none" }} />
      ))}
      {LABELS.map(([x, y, w, t], i) => (
        <div key={i} className="absolute flex items-center justify-center" style={place(x - 200, y - 14, 400, 30)}>
          <Fit className={w}>{t}</Fit>
        </div>
      ))}
    </div>
  );
}

const HANDLES = [[1238.5, 234], [1491, 234], [1743.5, 234], [1238.5, 275], [1743.5, 275], [1238.5, 316], [1491, 316], [1743.5, 316]];
const Selection = () => (
  <svg className="absolute left-0 top-0 overflow-visible" width="1360" height="765" viewBox="416 208 1360 765" fill="none">
    <path d="M1490.500 208v20" stroke="#555" />
    <path d="M1237.500 233.500h505M1237.500 233.500v82M1742.500 233.500v82M1237.500 315.500h505" stroke="#333" strokeDasharray="2 1.200" />
    {HANDLES.map(([x, y], i) => <circle key={i} cx={x} cy={y} r="6" fill="#fff" stroke="#5f5f5f" strokeWidth="2.300" />)}
    <circle cx="1252.500" cy="233.500" r="6" fill="#ffe400" stroke="#5f5f5f" strokeWidth="2" />
  </svg>
);

/* ---------- Slide 2 thumbnail ---------- */
const BARS = [
  ["Pôle Emploi :", "60", "bg-[#5b9bd5]"], ["ML :", "30", "bg-[#a9d18e]"], ["Environnement :", "30", "bg-[#afabaa]"],
  ["RDV RA :", "", "bg-[#ed7d31]"], ["CLIC :", "30", "bg-[#f4b183]"], ["AUTRE :", "", "bg-[#d9d9d9]"], ["Interne :", "", "bg-[#bfbfbf]"],
];
const WEEKS = [["", "", "", "", "94", "84", "71"], ...Array(4).fill(["77", "158", "148", "15", "90", "148", "124"])];
const CAL_COLS = "grid-cols-[20px_21px_21px_20px_21px_21px_21px]";
const DAYS = ["Lundi", "Mardi", "Mercredi", "Jeudi", "Vendredi", "Samedi", "Dimanche"];
function CalendarThumb() {
  return (
    <div className="flex h-[124px] w-[218px] flex-col border border-[#8a8a8a] bg-white px-[2px] pt-1 font-['Lato','Open_Sans',sans-serif] text-[4.5px] leading-none text-[#333]">
      <div className="flex h-[11px] w-[102px] items-center justify-center border border-[#2f5597]">JOUR/MOIS/ANNEE</div>
      <div className="flex">
        <div className="ml-[3px] w-[56px] pt-[7px]">
          <div className="mb-1 flex h-[7px] w-10 items-center whitespace-nowrap border border-[#2f5597] pl-[3px]"><span className="mr-[2px] h-1 w-1 shrink-0 rotate-45 bg-[#2f5597]" />Physique/Tel</div>
          {BARS.map(([n, v, c]) => (
            <div key={n} className={"mb-[1.7px] flex h-[9px] items-center border border-[#2f5597] pl-[1px] " + c}><span className="w-[34px] whitespace-nowrap">{n}</span>{v}</div>
          ))}
          <div className="mt-1 flex h-2 items-center justify-center border border-[#2f5597] bg-[#f2f2f2]">TOTAL journée: 150</div>
        </div>
        <div className="ml-1 mt-[3px] h-[101px] w-[147px] border border-[#555]">
          <div className="flex h-[5px] items-center justify-center bg-[#3f5168] text-[4px] text-white">JANVIER 2016</div>
          <div className={"grid " + CAL_COLS}>
            {DAYS.map((d) => <span key={d} className="flex h-1 items-center justify-center text-[3px]">{d}</span>)}
            {WEEKS.flat().map((v, i) => <span key={i} className={"flex h-[18px] items-center justify-center border-t border-[#666] " + (i % 7 ? "border-l" : "")}>{v}</span>)}
          </div>
        </div>
      </div>
    </div>
  );
}

function Workspace() {
  return (
    <div className="relative flex h-[793px] overflow-hidden bg-[#666666]">
      <div className="absolute left-0 top-0 h-[7px] w-full bg-gradient-to-b from-[#3d403f] to-[#606060]" />
      <div className="flex w-[290px] shrink-0 flex-col pt-[21px]">
        <div className="flex">
          <span className="w-[41px] pl-[15px] font-['Open_Sans'] text-[18px] leading-[18px] text-white">1</span>
          <div className="h-[130px] w-[224px] bg-[#ec9482] p-[3px]">
            <div className="h-[124px] w-[218px] overflow-hidden border border-[#666]">
              <div className="origin-top-left scale-[0.159]"><Slide thumb /></div>
            </div>
          </div>
        </div>
        <div className="mt-[22px] flex">
          <span className="w-11 pl-[15px] font-['Open_Sans'] text-[18px] leading-[12px] text-white">2</span>
          <CalendarThumb />
        </div>
      </div>
      <div className="mt-[3px] h-[787px] w-px shrink-0 bg-[#a0a0a0]" />
      <div className="flex flex-1 flex-col">
        <div className="flex h-[789px]">
          <div className="relative ml-[125px] mt-[7px] h-[765px] w-[1360px] shrink-0 ring-1 ring-[#8c8c8c]">
            <Slide />
            <Selection />
          </div>
          <div className="ml-auto mr-px mt-[3px] flex h-[760px] w-[18px] flex-col">
            <div className="flex h-4 items-center justify-center bg-[#d6d6d6]"><Ic vb="0 0 10 6" className="h-[6px] w-[10px]"><path d="M0 6l5-5.500L10 6z" fill="#222" /></Ic></div>
            <div className="h-[232px] bg-[#444444]" />
            <div className="h-[219px] bg-[#d4d4d4]" />
            <div className="h-[232px] bg-[#444444]" />
            <div className="mt-px flex h-[18px] shrink-0 items-center justify-center bg-[#d6d6d6]"><Ic vb="0 0 10 6" className="h-[6px] w-[10px]"><path d="M0 0l5 5.500L10 0z" fill="#222" /></Ic></div>
            <Ic vb="0 0 14 16" className="mx-auto mt-1 h-4 w-[14px]"><path d="M7 0l5 8H2zM7 6l6 9H1z" fill="#cfcfcf" /></Ic>
            <Ic vb="0 0 14 16" className="mx-auto mt-[5px] h-4 w-[14px]"><path d="M7 16l5-8H2zM7 10l6-9H1z" fill="#cfcfcf" /></Ic>
          </div>
        </div>
        <div className="h-px w-full bg-[#999]" />
        <div className="mt-[2px] h-px w-full bg-[#444]" />
      </div>
    </div>
  );
}

/* ---------- Status bar ---------- */
function StatusBar() {
  const s = { stroke: "#333", strokeWidth: 1.2 };
  return (
    <div className="flex h-[26px] items-center bg-[#bfbab7] text-[12.5px] text-[#333]">
      <Fit className="ml-[10px] w-[105px]">Diapositive 1 de 2</Fit>
      <Ic vb="0 0 18 18" className="ml-6 h-[18px] w-[18px]"><path d="M8 16.500H1V1h6l1.500 1.500L10 1h7v9M8.500 2.500V12M8 13l3 3.500 6-6.500" {...s} /></Ic>
      <Ic vb="0 0 18 18" className="ml-[22px] h-[18px] w-[18px]"><circle cx="8" cy="2.500" r="2" {...s} /><path d="M1 3l4 2.500h6L15 3l1 1.500-5 3.500v3M1 3L0 4.500 5 8l-2 8.500 2 .5 3-6M9 9l8.500 8.500M17.500 9L9 17.500" {...s} /></Ic>
      <Fit className="ml-[4px] w-[269px]">Accessibilité : consultez nos recommandations</Fit>
      <Ic vb="0 0 20 19" className="ml-[920px] h-[19px] w-5"><path d="M7 4l3-3.200L13 4M0 8h20M0 13h20M0 18h20" {...s} /></Ic>
      <Fit className="ml-[2px] w-[35px]">Notes</Fit>
      <div className="ml-6 flex h-[26px] w-[50px] shrink-0 items-center justify-center bg-[#9d9b99]">
        <Ic vb="0 0 18 16" className="h-4 w-[18px]"><path d="M.7.700h16.600v14.600H.7zM4.500.700v14.600M4.500 12h12.800M8 4h6v5H8zM10 6.500h2" {...s} /></Ic>
      </div>
      <Ic vb="0 0 18 16" className="ml-4 h-4 w-[18px]"><path d="M.7.700h6v5h-6zM11 .7h6v5h-6zM.7 10h6v5h-6zM11 10h6v5h-6z" {...s} /></Ic>
      <Ic vb="0 0 17 17" className="ml-8 h-[17px] w-[17px]"><path d="M8.500 2.500L6 1H.7v13.500H6l2.500 1.500 2.500-1.500h5.300V1H11zM8.500 2.500V16M2.500 4.500h4M2.500 7.500h4M2.500 10.500h4M10.500 4.500h4M10.500 7.500h4M10.500 10.500h4" {...s} /></Ic>
      <Ic vb="0 0 17 17" className="ml-[33px] h-[17px] w-[17px]"><path d="M0 1h17M2 1v8.500h13V1M8.500 9.500V16M4.500 16h8M6 4.500h5" {...s} /></Ic>
      <span className="ml-6 h-px w-[10px] shrink-0 bg-[#333]" />
      <div className="ml-[6px] flex h-4 w-[125px] shrink-0 items-center">
        <span className="h-px w-[50px] bg-[#333]" /><span className="h-[14px] w-[6px] bg-[#777]" /><span className="h-px w-[7px] bg-[#333]" /><span className="h-2 w-px bg-[#333]" /><span className="h-px flex-1 bg-[#333]" />
      </div>
      <Ic vb="0 0 10 10" className="ml-[5px] h-[10px] w-[10px]"><path d="M5 0v10M0 5h10" {...s} /></Ic>
      <Fit className="ml-4 w-7">85 %</Fit>
      <Ic vb="0 0 20 18" className="ml-4 h-[18px] w-5"><path d="M6.500 5h7v8h-7zM8 3l2-2.300L12 3M8 15l2 2.300 2-2.300M3.500 6.500L1 9l2.500 2.500M16.500 6.500L19 9l-2.500 2.500" {...s} /></Ic>
    </div>
  );
}

/* ---------- Task bar ---------- */
function AppSlot({ className = "", mark, children }) {
  return (
    <div className={"relative flex h-[50px] w-[50px] shrink-0 items-center justify-center rounded-[4px] " + className}>
      {children}
      {mark && <span className={"absolute bottom-[1px] h-[4px] rounded-full " + mark} />}
    </div>
  );
}
function TaskBar() {
  return (
    <div className="flex h-[60px] items-center border-t border-[#44423f] bg-[#232220] text-white">
      <Ic vb="0 0 30 26" className="ml-[25px] h-[26px] w-[30px]">
        <defs><linearGradient id="cl" x1="0" y1="0" x2="0" y2="1"><stop stopColor="#9dbdf5" /><stop offset="1" stopColor="#d6e4fb" /></linearGradient><linearGradient id="su" x1="0" y1="0" x2="1" y2="1"><stop stopColor="#f8c030" /><stop offset="1" stopColor="#ee6a10" /></linearGradient></defs>
        <circle cx="21" cy="7.500" r="7.500" fill="url(#su)" /><path d="M6 25a6 6 0 0 1 0-11 7.500 7.500 0 0 1 14-2 6.800 6.800 0 0 1 4 13z" fill="url(#cl)" />
      </Ic>
      <div className="-mt-px ml-[9px] flex w-20 flex-col gap-[6px] text-[14.5px] leading-none">
        <Fit className="w-7 text-white">11°C</Fit><Fit className="w-20 text-[#cfcfcf]">Ciel couvert</Fit>
      </div>
      <div className="ml-[358px] grid h-[29px] w-[29px] shrink-0 grid-cols-2 gap-px">
        <span className="rounded-tl-sm bg-gradient-to-br from-[#8be0ff] to-[#52ccff]" /><span className="rounded-tr-sm bg-gradient-to-br from-[#5fd6ff] to-[#35bfff]" />
        <span className="rounded-bl-sm bg-gradient-to-br from-[#5fd6ff] to-[#2ab2ff]" /><span className="rounded-br-sm bg-gradient-to-br from-[#38bcff] to-[#0a94f5]" />
      </div>
      <div className="ml-[17px] flex h-10 w-[275px] shrink-0 items-center rounded-full border border-[#42413f] bg-[#383735]">
        <Ic className="ml-[14px] h-5 w-[18px]"><circle cx="8.500" cy="8" r="6.800" stroke="#e6e6e6" strokeWidth="2" /><path d="M13.500 13.500L19 19" stroke="#e6e6e6" strokeWidth="2.200" /></Ic>
        <Fit className="ml-[13px] w-[86px] text-[17px] text-[#cccccc]">Rechercher</Fit>
        <Ic vb="0 0 67 34" className="ml-[71px] h-[34px] w-[67px]">
          <path d="M0 34c0-7 3-9 12-9l18-3 20 3 16 2c-1 4-5 7-12 7z" fill="#b07a30" /><path d="M22 24l14 2 20-3v3l-18 3z" fill="#7a4c1c" />
          <path d="M6 22c2-6 5-8 10-7l1 6zM34 23c0-6-4-9-9-8l1 6z" fill="#5cb832" />
          <path d="M17 18h11c4 4 3 11-1 12h-8c-5-2-5-8-2-12z" fill="#4a3c60" />
          <circle cx="16" cy="8" r="4.500" fill="#e85a98" /><circle cx="27" cy="8" r="4.500" fill="#f48ab8" /><circle cx="22" cy="5" r="4.500" fill="#f79ac2" /><circle cx="18" cy="13" r="4.500" fill="#f07aac" /><circle cx="26" cy="13" r="4.500" fill="#e85a98" /><circle cx="22" cy="9.500" r="3" fill="#f3a43c" />
          <path d="M38 17l8-2 4 5-6 6-7-1z" fill="#a9b4bd" /><path d="M45 18l6-6" stroke="#cdd6dc" strokeWidth="2" /><path d="M51 12l7-8" stroke="#2a92e0" strokeWidth="5.500" strokeLinecap="round" />
        </Ic>
      </div>
      <Ic vb="0 0 30 28" className="ml-[15px] h-7 w-[30px]"><rect x="0" y="8" width="23" height="20" rx="1" fill="#6b6b6b" /><rect x="7" y="0" width="23" height="20" rx="1" fill="#f2f2f2" /><path d="M7 8h16v12H7z" fill="#b4b4b4" /></Ic>
      <Ic vb="0 0 29 29" className="ml-[25px] h-[29px] w-[29px]"><defs><linearGradient id="tm" x1="1" y1="0" x2="0" y2="1"><stop stopColor="#a268d8" /><stop offset=".5" stopColor="#6a6fd0" /><stop offset="1" stopColor="#5050c8" /></linearGradient></defs><path d="M14.500 0a14.300 14.300 0 1 1-6 27L0 28l2-6.500A14.300 14.300 0 0 1 14.500 0z" fill="url(#tm)" /><rect x="6" y="8" width="12" height="12" rx="1.500" fill="#fff" /><path d="M19 12.500l3.500-3v9l-3.500-3z" fill="#fff" /></Ic>
      <Ic vb="0 0 30 28" className="ml-[26px] h-7 w-[30px]"><path d="M0 2c0-1 1-2 2-2h8l3 3v6H0z" fill="#e0a008" /><path d="M0 6h13l2-3h14l1 1v22H0z" fill="#fbca3a" /><path d="M5 27v-5c0-2 1-3 3-3h14c2 0 3 1 3 3v5z" fill="#0c6cc0" /><path d="M9 22.500h12" stroke="#043a78" strokeWidth="1" /></Ic>
      <Ic vb="0 0 29 32" className="ml-[25px] -mt-1 h-[32px] w-[29px]"><path d="M8 6V1.500h13V6" stroke="#30b4e8" strokeWidth="2" /><path d="M0 5h29v23c0 2-1 4-4 4H4c-3 0-4-2-4-4z" fill="#f0f0f0" /><path d="M9 12h5v5H9z" fill="#f35325" /><path d="M15 12h5v5h-5z" fill="#81bc06" /><path d="M9 18h5v5H9z" fill="#05a6f0" /><path d="M15 18h5v5h-5z" fill="#ffba08" /></Ic>
      <Ic vb="0 0 28 30" className="ml-[27px] h-[28px] w-7"><path d="M14 0l12 7 1 15-13 8L1 22 2 7z" fill="#4a5056" /><path d="M14 0L2 7l5 3z" fill="#b9c0c6" /><path d="M14 0l12 7-6 1zM27 22l-13 8-2-4z" fill="#8c949b" /><path d="M14 7l5 13-11 1z" fill="#16181c" /><path d="M14 0L7 21l7 9L1 22 2 7z" fill="#9aa2a8" opacity=".5" /></Ic>
      <Ic vb="0 0 30 30" className="ml-[26px] h-[30px] w-[30px]"><defs><linearGradient id="ma" x1="0" y1="1" x2="1" y2="0"><stop stopColor="#7a2cf0" /><stop offset=".4" stopColor="#2c6cf8" /><stop offset="1" stopColor="#10b0f8" /></linearGradient></defs><path d="M0 0h30v30H0z" fill="url(#ma)" /><path d="M4 22L10.500 8H13L6.500 22zM10 22L16.500 8H19l-6.500 14z" fill="#fff" /><path d="M16 22l6.500-14H25v14h-2.500V13l-4 9z" fill="#fff" /></Ic>
      <AppSlot className="ml-[15px]" mark="w-2 bg-[#9a9a9a]">
        <Ic vb="0 0 30 30" className="h-[30px] w-[30px]"><circle cx="15" cy="15" r="15" fill="#fff" /><path d="M2 7.500A15 15 0 0 1 28 7.500H15a7.500 7.500 0 0 0-6.500 11.200z" fill="#e33b2e" /><path d="M2 7.500A15 15 0 0 0 15 30l6.500-11.200A7.500 7.500 0 0 1 8.500 18.700z" fill="#2ea24e" /><path d="M15 30A15 15 0 0 0 28 7.500H15a7.500 7.500 0 0 1 6.500 11.200z" fill="#fcc934" /><circle cx="15" cy="15" r="7.500" fill="#fff" /><circle cx="15" cy="15" r="5.800" fill="#1a73e8" /></Ic>
        <Ic className="absolute right-[3px] top-[3px] h-[21px] w-[21px]"><circle cx="10" cy="10" r="10" fill="#50626a" /><path d="M5 16L9 4M9 17l4-13M14 15l2-8" stroke="#b4bebe" strokeWidth="1.600" /><path d="M3 12l3-7M12 17l3-6" stroke="#22323a" strokeWidth="1.600" /></Ic>
      </AppSlot>
      <AppSlot className="ml-[5px]"><Ic vb="0 0 30 30" className="h-[30px] w-[30px]"><rect width="30" height="30" rx="3" fill="#4a4a4a" /><path d="M7 9.500L23 5v5.500L14 13l9 3v5L7 26v-5l9-3-9-3z" fill="#ff9800" /></Ic></AppSlot>
      <AppSlot className="ml-[5px] border border-[#3b3a38] bg-[#2f2e2c]" mark="w-5 bg-[#4cb4f0]">
        <Ic vb="0 0 30 28" className="h-7 w-[30px]"><circle cx="16" cy="14" r="14" fill="#d35230" /><path d="M16 0a14 14 0 0 1 14 14H16z" fill="#ff8f6b" /><path d="M4 14h26a14 14 0 0 1-24 10z" fill="#e0573a" /><rect x="0" y="6" width="15" height="15" rx="1.500" fill="#c43e1c" /><text x="7.500" y="18" textAnchor="middle" fontSize="12" fontWeight="700" fontFamily="Open Sans" fill="#fff">P</text></Ic>
      </AppSlot>
      <AppSlot className="ml-[5px]" mark="w-2 bg-[#9a9a9a]">
        <Ic vb="0 0 30 30" className="h-[30px] w-[30px]"><circle cx="15" cy="15" r="15" fill="#5865f2" /><path d="M10.500 8.500c3-1 6-1 9 0 2.500 3 4 7 3.500 11-1.500 1-3 1.700-4 1.900l-1.200-2h-5.600l-1.200 2c-1-.2-2.500-.9-4-1.900-.5-4 1-8 3.500-11z" fill="#fff" /><circle cx="12" cy="15.500" r="1.900" fill="#5865f2" /><circle cx="18" cy="15.500" r="1.900" fill="#5865f2" /></Ic>
      </AppSlot>
      <AppSlot className="ml-[5px] bg-[#3e2626]" mark="w-2 bg-[#f58a94]">
        <Ic vb="0 0 30 30" className="h-[29px] w-[29px]"><defs><linearGradient id="st" x1="0" y1="0" x2="0" y2="1"><stop stopColor="#0b1a44" /><stop offset="1" stopColor="#1680c0" /></linearGradient></defs><circle cx="15" cy="15" r="14.500" fill="url(#st)" /><path d="M1 17l9 3 9-8" stroke="#fff" strokeWidth="4.500" /><circle cx="19.500" cy="10.500" r="5" fill="#16275a" stroke="#fff" strokeWidth="2" /><circle cx="10" cy="20.500" r="3.800" fill="#fff" /><circle cx="24" cy="26" r="3" fill="#f4b41c" /></Ic>
      </AppSlot>
      <div className="mr-[25px] ml-auto flex items-center">
        <Ic vb="0 0 14 9" className="h-[9px] w-[14px]"><path d="M1 8l6-6.500L13 8" stroke="#fff" strokeWidth="1.700" /></Ic>
        <Ic vb="0 0 22 18" className="ml-[21px] h-[18px] w-[22px]"><path d="M5 13a5 5 0 0 1 0-8.500 6.500 6.500 0 0 1 12-.5 5 5 0 0 1 1 9z" fill="#b0b0b0" /><circle cx="15" cy="12" r="6" fill="#fff" /><path d="M12 11.500c1-3 5-3 6 0M18 12.500c-1 3-5 3-6 0M18.500 9v3h-3M11.500 15v-3h3" stroke="#1872c4" strokeWidth="1.300" /></Ic>
        <Ic vb="0 0 20 15" className="ml-[20px] h-[15px] w-5"><path d="M1 6c5-6 13-6 18 0M4 9c3.500-4 8.500-4 12 0M7 12c2-2 4-2 6 0" stroke="#fff" strokeWidth="1.500" /><circle cx="10" cy="13.500" r="1.400" fill="#fff" /></Ic>
        <Ic vb="0 0 20 14" className="ml-[9px] h-[14px] w-5"><path d="M1 4.500h3.500L9 1v12L4.500 9.500H1zM12.500 4l6 6M18.500 4l-6 6" stroke="#fff" strokeWidth="1.400" /></Ic>
        <Ic vb="0 0 22 14" className="ml-[11px] h-[14px] w-[22px]"><rect x=".8" y=".8" width="17.500" height="12.400" rx="3" stroke="#fff" strokeWidth="1.500" /><rect x="3.500" y="3.500" width="12" height="7" rx="1" fill="#fff" /><path d="M20.300 4.500v5" stroke="#fff" strokeWidth="2" /></Ic>
        <div className="-mt-px ml-[18px] flex w-[78px] flex-col items-end gap-[6px] text-[14.5px] leading-none">
          <Fit className="w-9">14:01</Fit><Fit className="w-[78px]">28/03/2023</Fit>
        </div>
        <span className="ml-[9px] flex h-5 w-5 items-center justify-center rounded-full bg-[#4cc2ff] text-[12px] leading-none text-black">1</span>
      </div>
    </div>
  );
}

export default function App() {
  return (
    <div className="flex h-[1080px] w-[1920px] flex-col overflow-hidden bg-[#bfbab7] font-['Open_Sans','Noto_Sans',sans-serif]">
      <TitleBar />
      <Tabs />
      <Ribbon />
      <Workspace />
      <StatusBar />
      <TaskBar />
    </div>
  );
}
